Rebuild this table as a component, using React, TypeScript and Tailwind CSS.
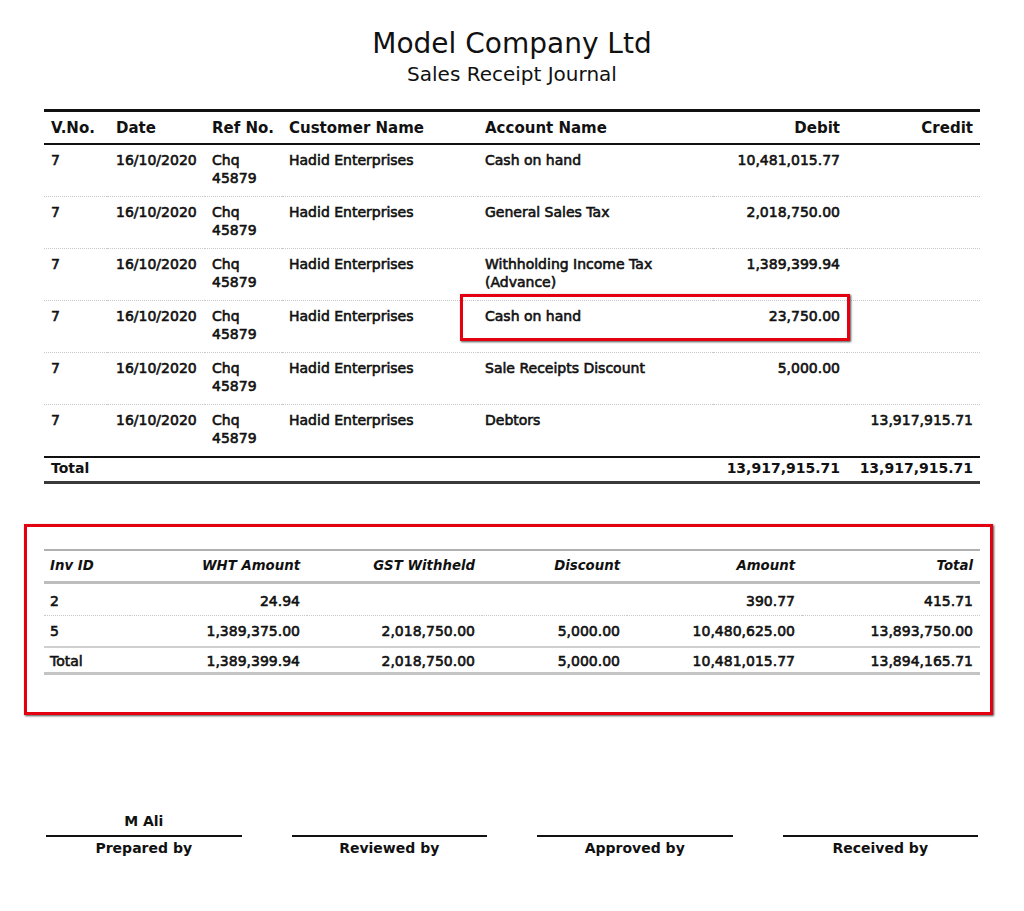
import React from "react";

const ROWS = [
  { account: ["Cash on hand"], debit: "10,481,015.77", credit: "" },
  { account: ["General Sales Tax"], debit: "2,018,750.00", credit: "" },
  { account: ["Withholding Income Tax", "(Advance)"], debit: "1,389,399.94", credit: "" },
  { account: ["Cash on hand"], debit: "23,750.00", credit: "" },
  { account: ["Sale Receipts Discount"], debit: "5,000.00", credit: "" },
  { account: ["Debtors"], debit: "", credit: "13,917,915.71" },
];

const INVOICES = [
  { id: "2", wht: "24.94", gst: "", discount: "", amount: "390.77", total: "415.71" },
  { id: "5", wht: "1,389,375.00", gst: "2,018,750.00", discount: "5,000.00", amount: "10,480,625.00", total: "13,893,750.00" },
];

const SIGNERS = [
  { name: "M Ali", label: "Prepared by" },
  { name: "", label: "Reviewed by" },
  { name: "", label: "Approved by" },
  { name: "", label: "Received by" },
];

const thick = "[-webkit-text-stroke:0.6px_#111]";

function JournalTable() {
  const cell = "px-[7px] pt-[6px] pb-[9px] align-top leading-[18px]";
  return (
    <div className="relative mx-[44px]">
      <table className="w-[936px] table-fixed border-collapse text-[14px] text-[#111]">
        <colgroup>
          <col className="w-[63px]" />
          <col className="w-[98px]" />
          <col className="w-[77px]" />
          <col className="w-[196px]" />
          <col className="w-[235px]" />
          <col className="w-[134px]" />
          <col className="w-[133px]" />
        </colgroup>
        <thead className="text-[15px]">
          <tr className="h-[33px] border-t-[3px] border-b-2 border-[#111]">
            <th className="px-[7px] pt-[2px] text-left font-bold">V.No.</th>
            <th className="pl-[9px] pr-[5px] pt-[2px] text-left font-bold">Date</th>
            <th className="px-[7px] pt-[2px] text-left font-bold">Ref No.</th>
            <th className="px-[7px] pt-[2px] text-left font-bold">Customer Name</th>
            <th className="px-[7px] pt-[2px] text-left font-bold">Account Name</th>
            <th className="px-[7px] pt-[2px] text-right font-bold">Debit</th>
            <th className="px-[7px] pt-[2px] text-right font-bold">Credit</th>
          </tr>
        </thead>
        <tbody>
          {ROWS.map((r, i) => (
            <tr
              key={i}
              className={
                thick + (i < ROWS.length - 1 ? " border-b border-dotted border-[#c8c8c8]" : "")
              }
            >
              <td className={cell}>7</td>
              <td className="pl-[9px] pr-[5px] pt-[6px] pb-[9px] align-top leading-[18px]">16/10/2020</td>
              <td className={cell}>
                Chq
                <br />
                45879
              </td>
              <td className={cell}>Hadid Enterprises</td>
              <td className={cell}>
                {r.account.map((a, j) => (
                  <div key={j}>{a}</div>
                ))}
              </td>
              <td className={cell + " text-right"}>{r.debit}</td>
              <td className={cell + " text-right"}>{r.credit}</td>
            </tr>
          ))}
          <tr className="border-t-2 border-b-[3px] border-t-[#111] border-b-[#3a3a3a] font-bold">
            <td className="px-[7px] pt-[1px] pb-[3px] leading-[19px]">Total</td>
            <td />
            <td />
            <td />
            <td />
            <td className="px-[7px] pt-[1px] pb-[3px] text-right leading-[19px]">13,917,915.71</td>
            <td className="px-[7px] pt-[1px] pb-[3px] text-right leading-[19px]">13,917,915.71</td>
          </tr>
        </tbody>
      </table>
      {/* highlight around the 4th line */}
      <div className="pointer-events-none absolute left-[416px] top-[185px] h-[47px] w-[390px] border-[3px] border-[#e3000f] shadow-[1px_1px_2px_rgba(0,0,0,0.7)]" />
    </div>
  );
}

function InvoiceTable() {
  const th = "px-[7px] text-right font-bold italic";
  const td = "px-[7px] text-right";
  return (
    <div className="ml-[24px] mt-[40px] w-[969px] border-[3px] border-[#e3000f] pl-[17px] pr-[10px] pt-[22px] pb-[37px] shadow-[1px_1px_2px_rgba(0,0,0,0.7)]">
      <table className="w-[936px] table-fixed border-collapse text-[14px] text-[#111]">
        <colgroup>
          <col className="w-[86px]" />
          <col className="w-[177px]" />
          <col className="w-[175px]" />
          <col className="w-[145px]" />
          <col className="w-[175px]" />
          <col className="w-[178px]" />
        </colgroup>
        <thead className="text-[13.3px]">
          <tr className="h-[33px] border-t-2 border-b-[3px] border-t-[#b0b0b0] border-b-[#bdbdbd]">
            <th className="px-[6px] text-left font-bold italic">Inv ID</th>
            <th className={th}>WHT Amount</th>
            <th className={th}>GST Withheld</th>
            <th className={th}>Discount</th>
            <th className={th}>Amount</th>
            <th className={th}>Total</th>
          </tr>
        </thead>
        <tbody className={thick}>
          <tr className="h-[33px] border-b border-dotted border-[#c8c8c8] [&>td]:pt-[4px]">
            <td className="px-[6px] text-left">{INVOICES[0].id}</td>
            <td className={td}>{INVOICES[0].wht}</td>
            <td className={td}>{INVOICES[0].gst}</td>
            <td className={td}>{INVOICES[0].discount}</td>
            <td className={td}>{INVOICES[0].amount}</td>
            <td className={td}>{INVOICES[0].total}</td>
          </tr>
          <tr className="h-[31px] border-b-2 border-[#cfcfcf] [&>td]:pt-[2px]">
            <td className="px-[6px] text-left">{INVOICES[1].id}</td>
            <td className={td}>{INVOICES[1].wht}</td>
            <td className={td}>{INVOICES[1].gst}</td>
            <td className={td}>{INVOICES[1].discount}</td>
            <td className={td}>{INVOICES[1].amount}</td>
            <td className={td}>{INVOICES[1].total}</td>
          </tr>
          <tr className="h-[26px] border-b-[3px] border-[#c4c4c4] [&>td]:pt-[3px]">
            <td className="px-[6px] text-left">Total</td>
            <td className={td}>1,389,399.94</td>
            <td className={td}>2,018,750.00</td>
            <td className={td}>5,000.00</td>
            <td className={td}>10,481,015.77</td>
            <td className={td}>13,894,165.71</td>
          </tr>
        </tbody>
      </table>
    </div>
  );
}

export default function App() {
  return (
    <div className="min-h-[911px] w-[1024px] bg-white pt-[27px] text-[#111] [font-family:'DejaVu_Sans',Verdana,sans-serif]">
      <div className="text-center">
        <h1 className="text-[28px] leading-[34px]">Model Company Ltd</h1>
        <h2 className="mt-[1px] text-[20px] leading-[25px]">Sales Receipt Journal</h2>
      </div>

      <div className="mt-[22px]">
        <JournalTable />
      </div>

      <InvoiceTable />

      <div className="mx-[46px] mt-[97px] grid grid-cols-4 gap-x-[50px] text-[14px] font-bold">
        {SIGNERS.map((s) => (
          <div key={s.label} className="flex flex-col items-center">
            <div className="h-[19px] leading-[19px]">{s.name}</div>
            <div className="mt-[4px] h-[2px] w-full bg-[#111]" />
            <div className="mt-[2px] leading-[19px]">{s.label}</div>
          </div>
        ))}
      </div>
    </div>
  );
}
